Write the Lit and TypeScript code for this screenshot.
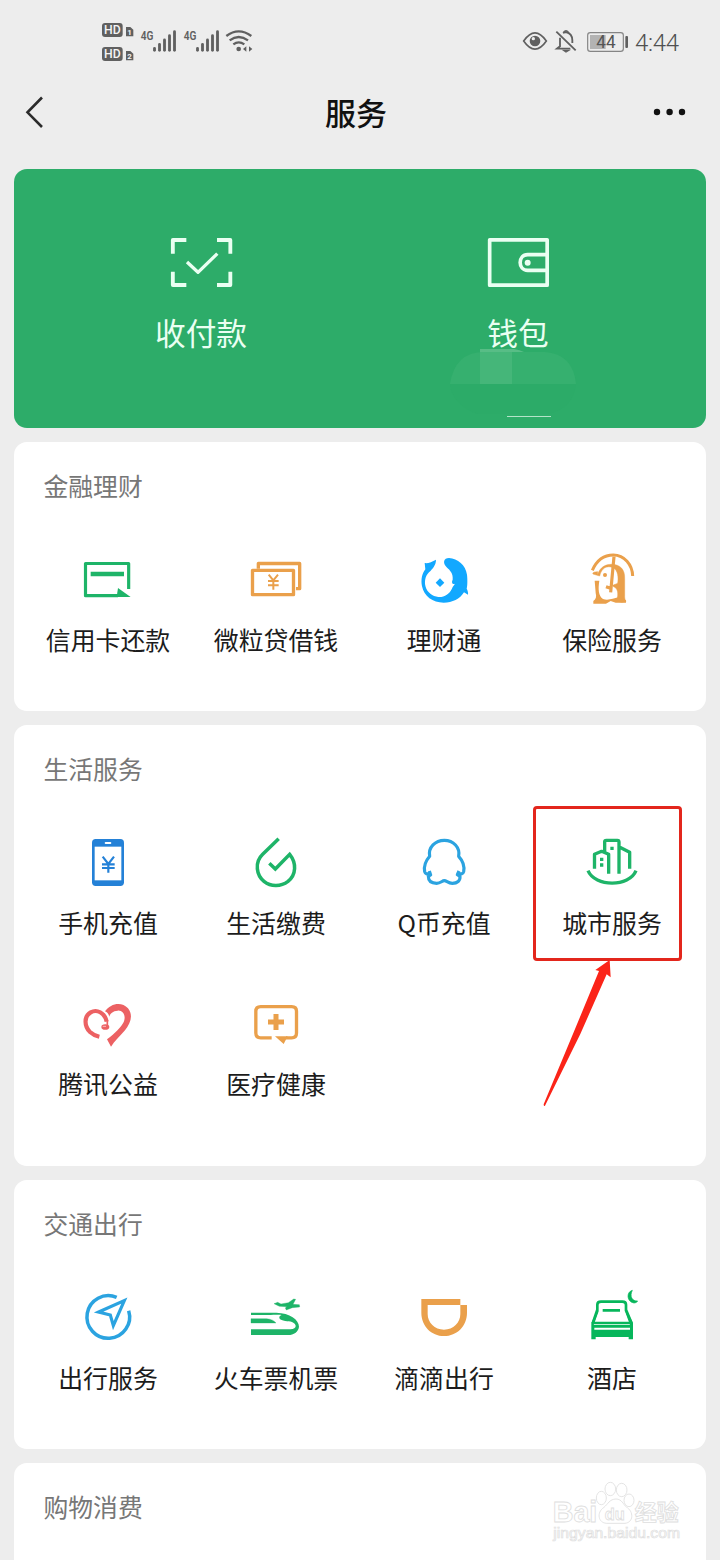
import { LitElement, html, css, svg } from "lit";
import { customElement, property } from "lit/decorators.js";

const GREEN = "#1eb468";
const LEAF = "#07b65b";
const ORANGE = "#eaa04b";
const BLUE = "#2ba3e0";

/* Each glyph is drawn on a 192-unit square. */
const glyphs: Record<string, unknown> = {
  creditCard: svg`<g transform="translate(-138 -24)" fill="none" stroke=${GREEN} stroke-width="9.500" stroke-linejoin="round">
    <path d="M296 147V70.500H166.500V167H264"/><path d="M182 102H282" stroke-width="14"/>
    <path d="M264 144L302 171H260Z" fill=${GREEN} stroke="none"/></g>`,
  notes: svg`<g transform="translate(-642 -24)" fill="none" stroke=${ORANGE} stroke-width="10" stroke-linejoin="round">
    <path d="M667.500 91H790.500V164H667.500Z"/><path d="M685 86V70.500H809V146H798"/>
    <path d="M716 104L730 121L744 104M730 120V149M714 123H746M714 136H746" stroke-width="6"/></g>`,
  fish: svg`<g transform="translate(-96 -24)" fill="#12a8ff">
    <path d="M134 69C144 71 156 65 168 59C168 76 157 87 147 97C134 109 132 131 139 146C147 163 166 172 184 171C200 169 213 156 218 141L225 131C219 135 213 128 218 119C220 101 210 91 200 82C187 68 191 54 207 54C233 56 257 75 261 104C263 122 262 139 260 146C263 151 265 158 264 164L252 157C240 177 217 188 191 188C158 188 132 169 126 139C122 119 126 101 136 88Z"/>
    <path d="M180 115L193 128L180 141L167 128Z"/></g>`,
  insurance: svg`<g transform="translate(-600 -24)" fill="none" stroke=${ORANGE}>
    <path d="M637 91C651 59 675 45 700 45C733 45 757 74 758 108" stroke-width="9"/>
    <path d="M653 104C660 81 677 73 694 73C721 73 735 89 734 115V170C734 177 736 180 738 184C731 188 719 187 711 182C716 157 713 145 701 140C691 136 705 134 713 130C716 114 714 91 700 83C681 75 664 84 659 108L639 102C636 96 646 96 653 95Z" fill=${ORANGE} stroke=${ORANGE} stroke-width="1.500"/>
    <path d="M702 50L692 157M678 140L692 145" stroke-width="9.500"/>
    <path d="M644 122H658C654 147 655 167 669 177C684 183 701 175 714 172L738 181V188H707L692 183L678 191H640V183C648 178 650 170 647 159Z" fill=${ORANGE} stroke="none"/>
    <circle cx="675" cy="105" r="6" fill=${ORANGE} stroke="none"/></g>`,
  phone: svg`<g transform="translate(-138 -18)"><rect x="186" y="42" width="96" height="141" rx="11" fill="#2481d7"/>
    <rect x="194" y="65" width="80" height="101" fill="#fff"/><rect x="224" y="51" width="20" height="6" rx="3" fill="#fff"/>
    <path d="M218 95L235 117L252 95M235 117V143M216 118H254M216 129H254" fill="none" stroke="#2481d7" stroke-width="6.500"/></g>`,
  bills: svg`<g transform="translate(-642 -18)" fill="none" stroke=${GREEN} stroke-width="10.500">
    <path d="M746 41L698 88C672 113 680 151 702 169C723 186 753 185 774 169C799 149 800 114 779 88L736 132L718 115"/></g>`,
  penguin: svg`<g transform="translate(-96 -108)" fill="none" stroke=${BLUE} stroke-width="9.500" stroke-linejoin="round">
    <path d="M149 233C142 239 136 238 134 230C131 214 136 199 149 184C144 157 166 136 193 136C220 136 241 157 236 184C248 197 254 214 251 230C249 238 242 239 235 233"/>
    <path d="M148 228L152 240L145 244C145 258 155 265 170 265C182 265 186 257 193 257C200 257 204 265 217 265C232 265 241 257 240 244L232 239L237 228"/></g>`,
  city: svg`<g transform="translate(-600 -108)" fill="none" stroke=${GREEN} stroke-width="10" stroke-linejoin="round">
    <path d="M643.500 221V178L665 169L686 178V236M674 172V140Q674 136 679 136H712Q717 136 717 141V236M718 156L749 172V221"/>
    <path d="M624 227C645 277 748 277 768 227" stroke-width="10"/>
    <path d="M660 188H670V198H660ZM660 205H670V215H660ZM691 155H701V165H691Z" fill=${GREEN} stroke="none"/></g>`,
  heart: svg`<g transform="translate(-138 -21)">
    <path d="M230 110C224 82 200 72 182 82C160 95 164 124 179 140Q191 151 208 155" fill="none" stroke="#ec6163" stroke-width="12.500"/>
    <path d="M225 79C242 54 276 49 294 70C311 92 301 115 285 136C268 156 254 168 243 185L231 163C257 144 271 128 279 115C291 94 279 75 263 77C249 78 240 85 238 95Q234 82 225 79Z" fill="#ec6163"/>
    <ellipse cx="226" cy="126" rx="12" ry="8.500" fill="#ec6163"/><path d="M232 106V121" stroke="#ec6163" stroke-width="5"/>
    <path d="M218 124H228" stroke="#f8b9ba" stroke-width="3"/></g>`,
  medical: svg`<g transform="translate(-642 -21)" fill="none" stroke=${ORANGE} stroke-width="10">
    <path d="M725 158.500H692Q677.500 158.500 677.500 144V79Q677.500 65 692 65H785Q799.500 65 799.500 79V144Q799.500 158.500 785 158.500H768"/>
    <path d="M735 154H773L761 177Z" fill=${ORANGE} stroke="none"/><path d="M738 87V135M714 111H762" stroke-width="15"/></g>`,
  compass: svg`<g transform="translate(-138 -18)" fill="none" stroke=${BLUE}>
    <path d="M260 52A64 64 0 1 0 296 92" stroke-width="10.500"/>
    <path d="M206 96L283 62L250 137L241 105Z" stroke-width="9.500"/></g>`,
  train: svg`<g transform="translate(-642 -18)" fill=${GREEN}>
    <path d="M663 98H739C779 99 807 119 807 140C805 156 791 165 775 165H663V148H781C796 148 801 139 794 131C784 120 771 127 753 119C745 114 747 108 755 105C750 103 740 105 663 105Z"/>
    <path d="M663 116H710Q730 118 738 129H663ZM732 71L743 67L753 72L775 68L791 57L797 58L789 73L808 74L809 81L787 83L769 90L766 84L770 80L748 79Z" stroke=${GREEN} stroke-width="1"/></g>`,
  didi: svg`<g transform="translate(-96 -18)" fill=${ORANGE}>
    <path fill-rule="evenodd" d="M124 57H241V75H261V98C261 138 231 168 192 168C154 168 124 138 124 98ZM143 75V102C143 128 164 149 192 149C220 149 241 128 241 102V75Z"/></g>`,
  hotel: svg`<g transform="translate(-600 -18)" fill="none" stroke=${LEAF} stroke-width="8">
    <path d="M652 94V74Q652 65 663 65H727Q738 65 738 74V94M652 89L638 130M738 89L755 130M668 91H720M641 129H752"/>
    <path d="M634 129L651 92L656 94L641 135H750L735 94L740 92L759 129V178H746V171H647V178H634ZM643 143V149H750V143Z" fill=${LEAF} fill-rule="evenodd" stroke="none"/>
    <path d="M757 31C738 36 740 66 762 69Q770 69 773 63C756 64 748 49 757 31Z" fill=${LEAF} stroke=${LEAF} stroke-width="2"/></g>`,
};

interface Service { icon: string; label: string; marked?: boolean }
interface Section { title: string; size: string; items: Service[] }

const sections: Section[] = [
  { title: "金融理财", size: "one", items: [
    { icon: "creditCard", label: "信用卡还款" }, { icon: "notes", label: "微粒贷借钱" },
    { icon: "fish", label: "理财通" }, { icon: "insurance", label: "保险服务" } ] },
  { title: "生活服务", size: "two", items: [
    { icon: "phone", label: "手机充值" }, { icon: "bills", label: "生活缴费" },
    { icon: "penguin", label: "Q币充值" }, { icon: "city", label: "城市服务", marked: true },
    { icon: "heart", label: "腾讯公益" }, { icon: "medical", label: "医疗健康" } ] },
  { title: "交通出行", size: "one", items: [
    { icon: "compass", label: "出行服务" }, { icon: "train", label: "火车票机票" },
    { icon: "didi", label: "滴滴出行" }, { icon: "hotel", label: "酒店" } ] },
  { title: "购物消费", size: "one", items: [] },
];

@customElement("service-tile")
class ServiceTile extends LitElement {
  @property() icon = "";
  @property() label = "";
  @property({ type: Boolean }) marked = false;

  static styles = css`
    :host { display: flex; flex-direction: column; align-items: center; height: 161px; box-sizing: border-box; padding-top: 16px; position: relative; }
    .glyph { width: 64px; height: 64px; flex: none; }
    .label { margin-top: 9px; font-size: 24.900px; line-height: 36px; color: #1c1c1c; white-space: nowrap; }
    .frame { position: absolute; left: 5px; top: -9px; width: 143px; height: 149px; border: 3px solid #e3261c; border-radius: 4px; }
    .arrow { position: absolute; left: 2px; top: 130px; width: 110px; height: 170px; }
  `;

  render() {
    return html`
      <svg class="glyph" viewBox="0 0 192 192">${glyphs[this.icon]}</svg>
      <span class="label">${this.label}</span>
      ${this.marked ? html`
        <div class="frame"></div>
        <svg class="arrow" viewBox="0 0 330 510"><path d="M239 45L242 97L230 88L151 267L45 482Q41 485 41 478L131 262L207 78L196 75Z" fill="#fb2418"/></svg>` : ""}
    `;
  }
}

@customElement("app-root")
class AppRoot extends LitElement {
  static styles = css`
    :host { display: flex; flex-direction: column; position: relative; width: 720px; height: 1560px; overflow: hidden; background: #ededed;
      font-family: "Noto Sans CJK SC", "Noto Sans", sans-serif; }
    .status { display: flex; align-items: flex-start; height: 70px; padding: 0 40px 0 96px; flex: none; box-sizing: border-box; }
    .signals { width: 162px; height: 55px; margin-top: 15px; }
    .device { width: 114px; height: 35px; margin: 25px 0 0 auto; }
    .time { font: 300 24px/32px "Roboto", sans-serif; letter-spacing: -0.3px; color: #505050; margin: 27px 0 0 5px; width: 45px; white-space: nowrap; }
    .nav { display: grid; grid-template-columns: 60px 1fr 68px; align-items: center; height: 84px; margin-bottom: 15px; flex: none; }
    .back { width: 60px; height: 84px; }
    .title { font-size: 31px; font-weight: 500; line-height: 44px; text-align: center; color: #111; margin: 0; }
    .more { width: 68px; height: 84px; }
    .hero { display: grid; grid-template-columns: 317px 317px; height: 259px; margin: 0 14px; padding: 0 29px 0 28.500px; box-sizing: border-box; background: #2dac69; border-radius: 13px; flex: none; position: relative; }
    .action { display: flex; flex-direction: column; align-items: center; padding-top: 61px; color: #eafff2; }
    .action svg { width: 66px; height: 64px; }
    .action span { font-size: 30.700px; line-height: 44px; margin-top: 16px; position: relative; }
    .mosaic { position: absolute; left: 436px; top: 179px; width: 127px; height: 70px; }
    .card { height: 269px; margin: 14px 14px 0; padding: 0 10px; box-sizing: border-box; background: #fff; border-radius: 13px; flex: none; }
    .two { height: 441px; }
    .heading { margin: 0 0 4px; padding-left: 19.500px; font-size: 24.800px; font-weight: 400; line-height: 86px; color: #777; height: 86px; }
    .grid { display: grid; grid-template-columns: repeat(4, 168px); }
    .watermark { position: absolute; left: 545px; top: 1475px; width: 145px; height: 75px; }
  `;

  render() {
    const bars = (x: number) => [0, 1, 2, 3, 4].map((i) => svg`<path d=${`M${x + i * 15} ${151}V${[145, 133, 120, 107, 95][i]}`} stroke-width="8.500" stroke-linecap="round"/>`);
    const hd = (y: number, n: string) => svg`
      <rect x="306" y=${y} width="62" height="42" rx="9" fill="#606060"/>
      <text x="337" y=${y + 34} font-size="36" font-weight="500" text-anchor="middle" fill="#f4f4f4" textLength="50" lengthAdjust="spacingAndGlyphs">HD</text>
      <path d=${`M378 ${y + 12}H391L400 ${y + 20}V${y + 40}H378Z`} fill="#606060"/>
      <text x="389" y=${y + 36} font-size="24" font-weight="700" text-anchor="middle" fill="#f4f4f4">${n}</text>`;
    return html`
      <header class="status">
        <svg class="signals" viewBox="288 45 486 165" font-family="Roboto">
          ${hd(69, "1")}${hd(141, "2")}
          <g fill="#606060" font-size="39" font-weight="600">
            <text x="422" y="119" textLength="38" lengthAdjust="spacingAndGlyphs">4G</text>
            <text x="551" y="119" textLength="38" lengthAdjust="spacingAndGlyphs">4G</text>
          </g>
          <g stroke="#606060" fill="none">${bars(463.5)}${bars(592.5)}
            <path d="M679 108Q716 80 754 108M689 121Q716 101 744 121M700 133Q716 121 733 133" stroke-width="7"/></g>
          <circle cx="716" cy="147" r="7" fill="#606060"/>
          <path d="M729 147L739 139V155ZM757 147L747 139V155Z" fill="#606060"/>
        </svg>
        <svg class="device" viewBox="468 75 342 105" fill="none" stroke="#606060">
          <path d="M491 123Q525 74 559 123Q525 172 491 123Z" stroke-width="5"/>
          <circle cx="525" cy="123" r="16" fill="#606060" stroke="none"/><circle cx="520" cy="116" r="5" fill="#ededed" stroke="none"/>
          <path d="M589 95L647 151M600 113V139L591 146H631M609 99Q615 96 618 96Q637 101 637 121V129" stroke-width="5.500"/>
          <path d="M611 96Q618 88 625 96M611 151H626L618 156Z" stroke-width="4"/>
          <rect x="683" y="98" width="107" height="56" rx="8" stroke-width="3.500" stroke="#858585"/>
          <rect x="690" y="105" width="47" height="42" fill="#b3b3b3" stroke="none"/>
          <rect x="796" y="108" width="8" height="36" rx="3" fill="#606060" stroke="none"/>
          <text x="709" y="144" font-family="Roboto" font-size="53" fill="#555" stroke="none" textLength="58" lengthAdjust="spacingAndGlyphs">44</text>
        </svg>
        <span class="time">4:44</span>
      </header>
      <nav class="nav">
        <svg class="back" viewBox="0 70 60 84"><path d="M42 97.500L27.500 112.300L42 127" fill="none" stroke="#2b2b2b" stroke-width="2.600"/></svg>
        <h1 class="title">服务</h1>
        <svg class="more" viewBox="652 70 68 84" fill="#111"><circle cx="657" cy="112" r="3.200"/><circle cx="669.600" cy="112" r="3.200"/><circle cx="682" cy="112" r="3.200"/></svg>
      </nav>
      <section class="hero">
        <svg class="mosaic" viewBox="450 348 127 70">
          <path d="M450 384Q455 352 484 352H545Q573 354 576 384Z" fill="#36b06f"/>
          <path d="M480 349H514Q520 350 524 352H480Z" fill="#58bd86"/>
          <path d="M480 352H512V384H480Z" fill="#45b679"/>
          <path d="M450 384H576Q573 409 548 414H478Q452 405 450 384Z" fill="#2cab68"/>
          <path d="M507 416.500H551" stroke="#b4e4c9" stroke-width="1"/>
        </svg>
        <div class="action">
          <svg viewBox="114 60 198 192" fill="none" stroke="#eafff2" stroke-width="11.500" stroke-linejoin="round">
            <path d="M128.500 131V90H169M261 90H301V131M301 185V225H261M169 225H128.500V185"/><path d="M171 156L204 187L262 131" stroke-width="10"/>
          </svg>
          <span>收付款</span>
        </div>
        <div class="action">
          <svg viewBox="1065 60 198 192" fill="none" stroke="#eafff2" stroke-width="11" stroke-linejoin="round">
            <path d="M1079 89.500H1251.500V225.500H1079ZM1251 134H1193C1163 134 1163 181 1193 181H1251" /><circle cx="1193" cy="158" r="9" fill="#eafff2" stroke="none"/>
          </svg>
          <span>钱包</span>
        </div>
      </section>
      ${sections.map((s) => html`
        <section class="card ${s.size}">
          <h2 class="heading">${s.title}</h2>
          <div class="grid">${s.items.map((i) => html`<service-tile .icon=${i.icon} .label=${i.label} .marked=${!!i.marked}></service-tile>`)}</div>
        </section>`)}
      <svg class="watermark" viewBox="75 105 435 225" fill="#fff" stroke="#dedede" stroke-width="2.500" font-family="Liberation Sans">
        <text x="98" y="247" font-size="86" font-weight="700" textLength="134" lengthAdjust="spacingAndGlyphs">Bai</text>
        <ellipse cx="244" cy="174" rx="15" ry="20"/><ellipse cx="271" cy="147" rx="16" ry="20"/><ellipse cx="305" cy="150" rx="16" ry="20"/><ellipse cx="327" cy="181" rx="15" ry="19"/>
        <path d="M288 177C269 177 263 193 252 202C228 218 235 249 260 250H315C341 247 342 215 319 201C309 193 306 177 288 177Z"/>
        <text x="254" y="239" font-size="52" font-weight="700" textLength="60" lengthAdjust="spacingAndGlyphs">du</text>
        <text x="344" y="241" font-family="Noto Sans CJK SC" font-size="66" font-weight="700" textLength="132" lengthAdjust="spacingAndGlyphs">经验</text>
        <text x="100" y="295" font-size="42" stroke-width="2" textLength="380" lengthAdjust="spacingAndGlyphs">jingyan.baidu.com</text>
      </svg>
    `;
  }
}
